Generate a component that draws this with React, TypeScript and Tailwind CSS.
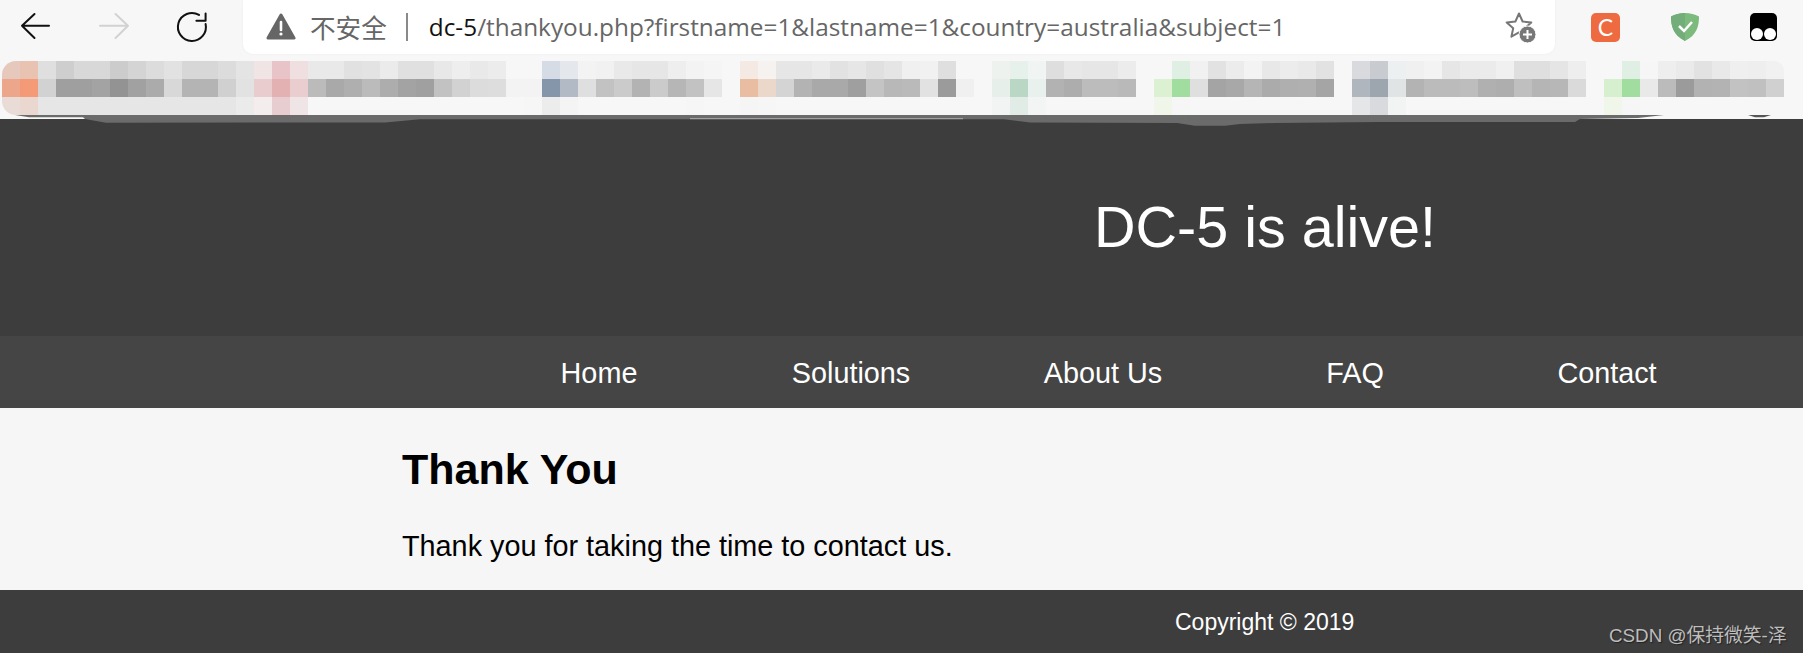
const mosaic: string[][] = [
  ["#e6c8bc", "#eba68c", "#e9dbd6"], ["#e8c3b1", "#f49a77", "#ead7d0"], ["#dfdfdf", "#d2d2d2", "#e6e6e6"],
  ["#cecece", "#9f9f9f", "#e6e6e6"], ["#d8d8d8", "#9f9f9f", "#e6e6e6"], ["#d8d8d8", "#a3a3a3", "#e6e6e6"],
  ["#cccccc", "#939393", "#e6e6e6"], ["#d4d4d4", "#a1a1a1", "#e6e6e6"], ["#dcdcdc", "#ababab", "#e6e6e6"],
  ["#e2e2e2", "#d8d8d8", "#e6e6e6"], ["#d7d7d7", "#b4b4b4", "#e6e6e6"], ["#d7d7d7", "#b4b4b4", "#e6e6e6"],
  ["#dcdcdc", "#d0d0d0", "#e6e6e6"], ["#e4e4e4", "#e2e2e2", "#ebebeb"], ["#f0e4e5", "#e9cccd", "#f3eded"],
  ["#e8c3c7", "#e3b1b2", "#e8cdd0"], ["#efdfe0", "#e9cdcf", "#f0e5e6"], ["#e9e9e9", "#bbbbbb", "#f7f7f7"],
  ["#e9e9e9", "#a9a9a9", "#f7f7f7"], ["#e1e1e1", "#afafaf", "#f7f7f7"], ["#e3e3e3", "#bbbbbb", "#f7f7f7"],
  ["#ebebeb", "#adadad", "#f7f7f7"], ["#e0e0e0", "#a3a3a3", "#f7f7f7"], ["#e0e0e0", "#a0a0a0", "#f7f7f7"],
  ["#e8e8e8", "#c2c2c2", "#f7f7f7"], ["#eeeeee", "#d2d2d2", "#f7f7f7"], ["#e9e9e9", "#dcdcdc", "#f7f7f7"],
  ["#ececec", "#dddddd", "#f7f7f7"], ["#f7f7f7", "#f3f3f3", "#f7f7f7"], ["#f7f7f7", "#f3f3f3", "#f6f6f6"],
  ["#d5dce6", "#8596aa", "#ececec"], ["#e4e8ec", "#b2bac6", "#f4f4f4"], ["#f3f3f3", "#dfdfdf", "#f7f7f7"],
  ["#f1f1f1", "#c2c2c2", "#f7f7f7"], ["#e9e9e9", "#cbcbcb", "#f7f7f7"], ["#e6e6e6", "#b3b3b3", "#f7f7f7"],
  ["#e6e6e6", "#cbcbcb", "#f7f7f7"], ["#eeeeee", "#b6b6b6", "#f7f7f7"], ["#f3f3f3", "#c2c2c2", "#f6f6f6"],
  ["#f5f5f5", "#e6e6e6", "#f7f7f7"], ["#f7f7f7", "#f7f7f7", "#f7f7f7"], ["#f5e9e3", "#e9bda2", "#f5f5f5"],
  ["#f5f2ef", "#ecd8cb", "#f6f6f6"], ["#e6e6e6", "#d4d4d4", "#f7f7f7"], ["#e6e6e6", "#b3b3b3", "#f7f7f7"],
  ["#eaeaea", "#a9a9a9", "#f7f7f7"], ["#e2e2e2", "#a9a9a9", "#f7f7f7"], ["#e6e6e6", "#9f9f9f", "#f7f7f7"],
  ["#e0e0e0", "#c4c4c4", "#f7f7f7"], ["#e5e5e5", "#b8b8b8", "#f7f7f7"], ["#f0f0f0", "#bababa", "#f7f7f7"],
  ["#f1f1f1", "#e2e2e2", "#f7f7f7"], ["#dfdfdf", "#9b9b9b", "#f7f7f7"], ["#f7f7f7", "#f0f0f0", "#f7f7f7"],
  ["#f7f7f7", "#f7f7f7", "#f7f7f7"], ["#edf2ef", "#e6efe9", "#f1f4f2"], ["#e7f1eb", "#bad6c5", "#e2ece6"],
  ["#f0f4f2", "#e9f1ee", "#f2f5f4"], ["#dedede", "#b2b2b2", "#f7f7f7"], ["#e8e8e8", "#adadad", "#f7f7f7"],
  ["#e6e6e6", "#bcbcbc", "#f7f7f7"], ["#e6e6e6", "#bcbcbc", "#f7f7f7"], ["#ececec", "#b9b9b9", "#f7f7f7"],
  ["#f7f7f7", "#f7f7f7", "#f7f7f7"], ["#f7f7f7", "#dcf0d2", "#f0f7ea"], ["#dfefe3", "#a0dd9e", "#f6f6f6"],
  ["#f1f1f1", "#dfdfdf", "#f7f7f7"], ["#e2e2e2", "#a4a4a4", "#f7f7f7"], ["#ececec", "#a8a8a8", "#f7f7f7"],
  ["#f3f3f3", "#b5b5b5", "#f7f7f7"], ["#e8e8e8", "#ababab", "#f7f7f7"], ["#ececec", "#afafaf", "#f7f7f7"],
  ["#e9e9e9", "#b0b0b0", "#f7f7f7"], ["#e2e2e2", "#a5a5a5", "#f7f7f7"], ["#f7f7f7", "#f7f7f7", "#f7f7f7"],
  ["#d8dadd", "#afb6be", "#e4e6e8"], ["#c8ccd0", "#9da5ae", "#d8dadd"], ["#ecf0f0", "#e1e4e4", "#f2f3f3"],
  ["#f0f0f0", "#b3b3b3", "#f7f7f7"], ["#f3f3f3", "#bbbbbb", "#f7f7f7"], ["#e6e6e6", "#bbbbbb", "#f7f7f7"],
  ["#ebebeb", "#bdbdbd", "#f7f7f7"], ["#ebebeb", "#b0b0b0", "#f7f7f7"], ["#f0f0f0", "#aeaeae", "#f7f7f7"],
  ["#dfdfdf", "#bfbfbf", "#f7f7f7"], ["#dfdfdf", "#b5b5b5", "#f7f7f7"], ["#e5e5e5", "#b7b7b7", "#f7f7f7"],
  ["#eeeeee", "#dadada", "#f7f7f7"], ["#f7f7f7", "#f7f7f7", "#f7f7f7"], ["#f7f7f7", "#d6efcf", "#f0f7ea"],
  ["#dfefe4", "#a2dda0", "#f6f6f6"], ["#f6f6f6", "#e9e9e9", "#f7f7f7"], ["#eeeeee", "#bbbbbb", "#f7f7f7"],
  ["#eaeaea", "#9b9b9b", "#f7f7f7"], ["#e2e2e2", "#b2b2b2", "#f7f7f7"], ["#e9e9e9", "#b3b3b3", "#f7f7f7"],
  ["#efefef", "#c2c2c2", "#f7f7f7"], ["#eeeeee", "#c0c0c0", "#f7f7f7"], ["#f1f1f1", "#d0d0d0", "#f7f7f7"],
];

const navItems = ["Home", "Solutions", "About Us", "FAQ", "Contact"];

const NavButton = ({ children }: { children: React.ReactNode }) => (
  <div className="w-[79px] h-[54px] pr-[9px] flex items-center justify-center">{children}</div>
);

const ExtensionButton = ({ children }: { children: React.ReactNode }) => (
  <div className="w-[79px] h-[54px] flex items-center justify-center">{children}</div>
);

const Toolbar = () => (
  <div className="h-[61px] pb-[7px] flex items-start bg-[#f7f7f7]">
    <NavButton>
      <svg width="34" height="34" viewBox="0 0 34 34" fill="none" stroke="#111" strokeWidth="2" strokeLinecap="round" strokeLinejoin="round">
        <path d="M31 15.7H4M16.5 4 4 15.7 16.5 28" />
      </svg>
    </NavButton>
    <NavButton>
      <svg width="34" height="34" viewBox="0 0 34 34" fill="none" stroke="#d2d2d2" strokeWidth="2" strokeLinecap="round" strokeLinejoin="round">
        <path d="M3 15.7h28M18.5 4 31 15.7 18.5 28" />
      </svg>
    </NavButton>
    <NavButton>
      <svg width="34" height="34" viewBox="0 0 34 34" fill="none" stroke="#111" strokeWidth="2" strokeLinecap="round" strokeLinejoin="round">
        <path d="M30.6 14A14 14 0 1 1 24 4.900" />
        <path d="M30.6 3.500v7.200h-9.200" />
      </svg>
    </NavButton>
    <div className="w-[1318px] h-[54px] ml-[7px] flex items-center bg-white rounded-b-[10px] pl-[23px] pr-[17px] shadow-[0_0_3px_rgba(0,0,0,0.05)]">
      <svg width="30" height="28" viewBox="0 0 30 28">
        <path d="M15 2 28 25H2Z" fill="#666" stroke="#666" strokeWidth="3" strokeLinejoin="round" />
        <path d="M15 9v8" stroke="#fff" strokeWidth="2.600" strokeLinecap="round" />
        <circle cx="15" cy="21" r="1.600" fill="#fff" />
      </svg>
      <span className="ml-[14px] text-[25.600px] text-[#666] font-['Noto_Sans_CJK_SC',sans-serif]">不安全</span>
      <div className="ml-[19px] w-[2px] h-[28px] bg-[#8a8a8a]"></div>
      <div className="ml-[21px] pt-[1px] text-[24.350px] text-[#666] whitespace-nowrap font-['Open_Sans',sans-serif]">
        <span className="text-[#111]">dc-5</span>/thankyou.php?firstname=1&amp;lastname=1&amp;country=australia&amp;subject=1
      </div>
      <svg className="ml-auto" width="34" height="34" viewBox="0 0 34 34" fill="none">
        <path d="M15 3.500l3.600 8 8.700.9-6.500 5.800 1.800 8.500-7.600-4.300-7.600 4.300 1.800-8.500-6.500-5.800 8.700-.9Z" stroke="#777" strokeWidth="2" strokeLinejoin="round" />
        <circle cx="23.500" cy="24.500" r="8.500" fill="#777" stroke="#fff" strokeWidth="1" />
        <path d="M23.500 20v9M19 24.500h9" stroke="#fff" strokeWidth="2" />
      </svg>
    </div>
    <div className="ml-[11px] flex">
      <ExtensionButton>
        <div className="w-[29px] h-[29px] rounded-[5px] bg-[#ee6a41] flex items-center justify-center text-white text-[23px] leading-none font-['Lato',sans-serif]">C</div>
      </ExtensionButton>
      <ExtensionButton>
        <svg width="30" height="30" viewBox="0 0 30 30">
          <path d="M15 1C10 1 5 2.500 1 4.500 1 14 3 23 15 29 27 23 29 14 29 4.500 25 2.500 20 1 15 1Z" fill="#7cba7e" />
          <path d="M15 1C10 1 5 2.500 1 4.500 1 14 3 23 15 29Z" fill="#73ad79" />
          <path d="M9 14l5 5 8-9" fill="none" stroke="#fff" strokeWidth="2.500" />
        </svg>
      </ExtensionButton>
      <ExtensionButton>
        <div className="w-[27px] h-[28px] rounded-[5px] bg-black flex items-end justify-center gap-[1px] pb-[1px]">
          <div className="w-[12px] h-[12px] rounded-full bg-white"></div>
          <div className="w-[12px] h-[12px] rounded-full bg-white"></div>
        </div>
      </ExtensionButton>
    </div>
  </div>
);

const BookmarksBlur = () => (
  <div className="bg-[#f7f7f7]">
    <div className="ml-[2px] w-[1782px] h-[54px] flex overflow-hidden rounded-l-[14px] rounded-tr-[10px]">
      {mosaic.map((col, i) => (
        <div key={i} className="w-[18px] shrink-0 flex flex-col">
          {col.map((color, j) => (
            <div key={j} className="h-[18px]" style={{ backgroundColor: color }}></div>
          ))}
        </div>
      ))}
    </div>
  </div>
);

// irregular edge left over from the blurred bookmarks bar
const TornEdge = () => (
  <svg className="block" width="1803" height="11" viewBox="0 0 1803 11">
    <rect width="1803" height="11" fill="#3d3d3d" />
    <path d="M0 0H85V4H0ZM1575 0H1803V4H1575Z" fill="#f7f7f7" />
    <path d="M690 3H963V4.300H690Z" fill="#b5b5b5" />
    <path d="M15 0H1664L1638 3 1580 4 1575 7 1379 7 1275 8 1240 9 1225 10.700H1195L1177 8 1030 7.500 1004 4.300H963V3.300H690V4.300H420L385 7.500 106 7.700 85 4 83 2.300H29Z" fill="#6b6b6b" />
    <path d="M1748 0H1771L1764 2.300H1755Z" fill="#555" />
  </svg>
);

export default function App() {
  return (
    <div className="relative w-[1803px] h-[653px] overflow-hidden font-['Liberation_Sans',Arial,sans-serif]">
      <Toolbar />
      <BookmarksBlur />
      <TornEdge />

      <header className="h-[210px] bg-[#3d3d3d] flex items-center pl-[1094px] pb-[6px]">
        <h1 className="text-[57.500px] leading-none text-white whitespace-nowrap">DC-5 is alive!</h1>
      </header>

      <nav className="h-[72px] bg-[#454545] pl-[473px] pt-[3px] grid grid-cols-[repeat(5,252px)] items-center">
        {navItems.map((item) => (
          <a key={item} className="text-center text-[28.800px] text-white">{item}</a>
        ))}
      </nav>

      <main className="h-[182px] bg-[#f6f6f6] pl-[402px] pt-[37px] text-black">
        <h2 className="text-[43px] leading-[48px] font-bold">Thank You</h2>
        <p className="mt-[37px] text-[28.800px] leading-[33px]">Thank you for taking the time to contact us.</p>
      </main>

      <footer className="h-[63px] bg-[#3d3d3d] pl-[1175px] pt-[19px] text-[23px] leading-[27px] text-white">
        Copyright © 2019
      </footer>

      <span className="absolute left-[1609px] top-[624px] text-[18.800px] leading-[24px] text-[#bdbdbd] whitespace-nowrap [text-shadow:1px_1px_1px_#222] font-['Liberation_Sans','Noto_Sans_CJK_SC',sans-serif]">
        CSDN @保持微笑-泽
      </span>
    </div>
  );
}
